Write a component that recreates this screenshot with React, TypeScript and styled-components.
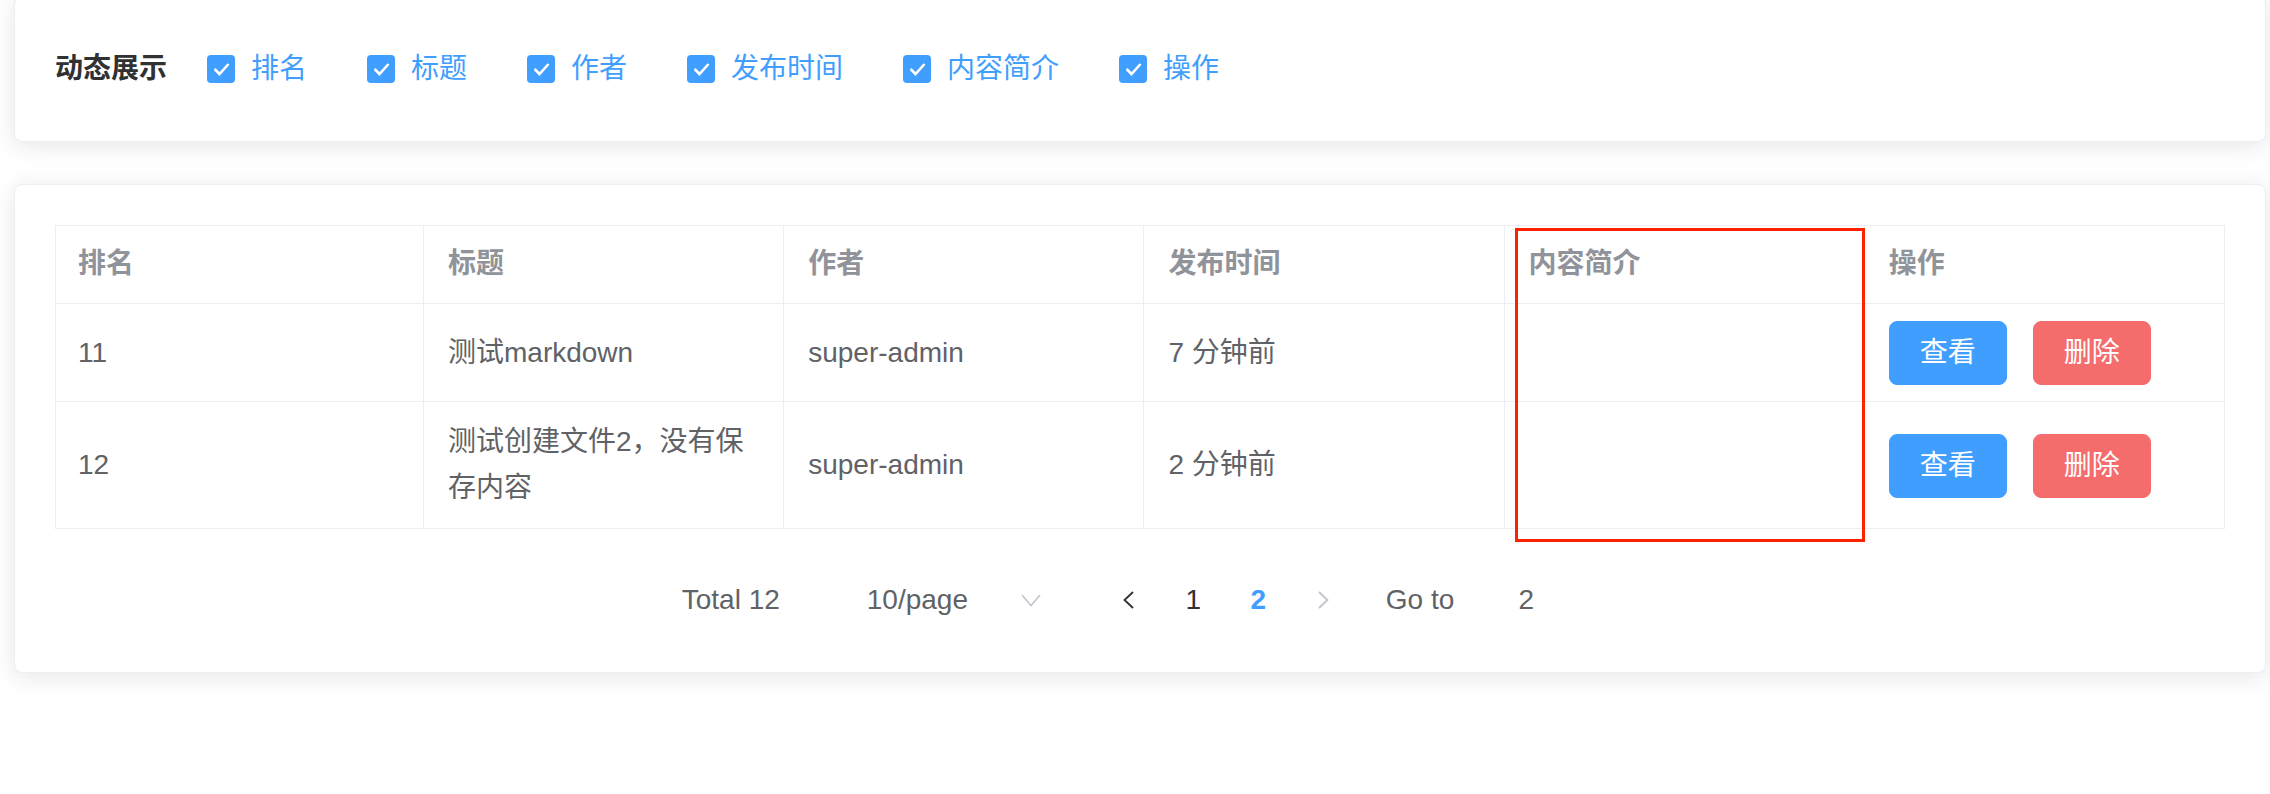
import React from 'react';
import styled, { createGlobalStyle } from 'styled-components';

const GlobalStyle = createGlobalStyle`
  html, body { margin: 0; padding: 0; background: #ffffff; }
  body { font-family: "Liberation Sans", "Noto Sans CJK SC", sans-serif; }
  *, *::before, *::after { box-sizing: border-box; }
`;

const Page = styled.div`
  display: flex;
  flex-direction: column;
  gap: 42px;
  margin-top: -4px;
  padding: 0 4px 40px 14px;
`;

const Card = styled.section`
  background: #ffffff;
  border: 1px solid #ebeef5;
  border-radius: 8px;
  box-shadow: 0 4px 24px 0 rgba(0, 0, 0, 0.1);
  padding: 40px;
`;

const FilterRow = styled.div`
  display: flex;
  align-items: center;
  height: 64px;
`;

const FilterLabel = styled.span`
  font-size: 28px;
  line-height: 28px;
  font-weight: 700;
  color: #303133;
  margin-right: 40px;
`;

const CheckItem = styled.label`
  display: inline-flex;
  align-items: center;
  gap: 16px;
  margin-right: 60px;
  cursor: pointer;
`;

const CheckBox = styled.span`
  display: flex;
  width: 28px;
  height: 28px;
  border-radius: 4px;
  background: #409eff;
`;

const CheckText = styled.span`
  font-size: 28px;
  line-height: 28px;
  color: #409eff;
`;

const Table = styled.div`
  position: relative;
  display: grid;
  grid-template-columns: 368px repeat(5, 1fr);
  border-left: 1px solid #ebeef5;
  border-top: 1px solid #ebeef5;
`;

type CellKind = 'head' | 'body' | 'ops';

const paddings: Record<CellKind, string> = {
  head: '15px 20px 16px',
  body: '17px 20px 17px',
  ops: '17px 20px 16px',
};

const Cell = styled.div<{ $kind: CellKind; $first?: boolean }>`
  display: flex;
  align-items: center;
  gap: 26px;
  min-width: 0;
  border-right: 1px solid #ebeef5;
  border-bottom: 1px solid #ebeef5;
  padding: ${(p) => paddings[p.$kind]};
  padding-left: ${(p) => (p.$first ? '22px' : '24px')};
  font-size: 28px;
  line-height: 46px;
  font-weight: ${(p) => (p.$kind === 'head' ? 700 : 400)};
  color: ${(p) => (p.$kind === 'head' ? '#909399' : '#606266')};
  word-break: break-all;
`;

const ActionButton = styled.button<{ $variant: 'primary' | 'danger' }>`
  height: 64px;
  padding: 0 30px;
  border-radius: 8px;
  border: 1px solid ${(p) => (p.$variant === 'primary' ? '#409eff' : '#f56c6c')};
  background: ${(p) => (p.$variant === 'primary' ? '#409eff' : '#f56c6c')};
  color: #ffffff;
  font-family: "Liberation Sans", "Noto Sans CJK SC", sans-serif;
  font-size: 28px;
  line-height: 28px;
  cursor: pointer;
  flex: none;
`;

const Highlight = styled.div`
  position: absolute;
  left: 1459px;
  top: 2px;
  width: 350px;
  height: 314px;
  border: 3px solid #ff2200;
  pointer-events: none;
`;

const Pager = styled.div`
  display: flex;
  align-items: center;
  justify-content: center;
  height: 64px;
  margin-top: 39px;
  padding-right: 22px;
  font-size: 28px;
  line-height: 28px;
  color: #606266;
`;

const Total = styled.span`
  margin-right: 57px;
`;

const SizeSelect = styled.div`
  display: flex;
  align-items: center;
  justify-content: space-between;
  width: 221px;
  height: 64px;
  padding: 0 17px 0 30px;
  margin-right: 38px;
`;

const PageItem = styled.span<{ $active?: boolean; $disabled?: boolean }>`
  display: flex;
  align-items: center;
  justify-content: center;
  width: 65px;
  height: 64px;
  color: ${(p) => (p.$active ? '#409eff' : p.$disabled ? '#c0c4cc' : '#303133')};
  font-weight: ${(p) => (p.$active ? 700 : 400)};
`;

const JumpLabel = styled.span`
  margin-left: 30px;
  margin-right: 22px;
`;

const JumpInput = styled.span`
  display: flex;
  align-items: center;
  justify-content: center;
  width: 100px;
  height: 64px;
`;

const columns = ['排名', '标题', '作者', '发布时间', '内容简介', '操作'];

const rows = [
  { rank: '11', title: '测试markdown', author: 'super-admin', time: '7 分钟前', intro: '' },
  { rank: '12', title: '测试创建文件2，没有保存内容', author: 'super-admin', time: '2 分钟前', intro: '' },
];

const Check = () => (
  <svg width="28" height="28" viewBox="0 0 28 28">
    <polyline points="7.5,14 12.5,19 21.5,9" fill="none" stroke="#ffffff" strokeWidth="2.6" />
  </svg>
);

const Chevron = ({ dir, color }: { dir: 'left' | 'right' | 'down'; color: string }) => {
  if (dir === 'down') {
    return (
      <svg width="20" height="13" viewBox="0 0 20 13">
        <polyline points="1,1 10,11.5 19,1" fill="none" stroke={color} strokeWidth="1.6" />
      </svg>
    );
  }
  return (
    <svg width="11" height="18" viewBox="0 0 11 18">
      <polyline
        points={dir === 'left' ? '10,1 1.5,9 10,17' : '1,1 9.5,9 1,17'}
        fill="none"
        stroke={color}
        strokeWidth="1.8"
      />
    </svg>
  );
};

export default function App() {
  return (
    <>
      <GlobalStyle />
      <Page>
        <Card>
          <FilterRow>
            <FilterLabel>动态展示</FilterLabel>
            {columns.map((c) => (
              <CheckItem key={c}>
                <CheckBox>
                  <Check />
                </CheckBox>
                <CheckText>{c}</CheckText>
              </CheckItem>
            ))}
          </FilterRow>
        </Card>
        <Card>
          <Table>
            {columns.map((c, i) => (
              <Cell key={c} $kind="head" $first={i === 0}>
                {c}
              </Cell>
            ))}
            {rows.map((r) => (
              <React.Fragment key={r.rank}>
                <Cell $kind="body" $first>
                  <span>{r.rank}</span>
                </Cell>
                <Cell $kind="body">
                  <span>{r.title}</span>
                </Cell>
                <Cell $kind="body">
                  <span>{r.author}</span>
                </Cell>
                <Cell $kind="body">
                  <span>{r.time}</span>
                </Cell>
                <Cell $kind="body">
                  <span>{r.intro}</span>
                </Cell>
                <Cell $kind="ops">
                  <ActionButton $variant="primary">查看</ActionButton>
                  <ActionButton $variant="danger">删除</ActionButton>
                </Cell>
              </React.Fragment>
            ))}
            <Highlight />
          </Table>
          <Pager>
            <Total>Total 12</Total>
            <SizeSelect>
              <span>10/page</span>
              <Chevron dir="down" color="#c0c4cc" />
            </SizeSelect>
            <PageItem>
              <Chevron dir="left" color="#303133" />
            </PageItem>
            <PageItem>1</PageItem>
            <PageItem $active>2</PageItem>
            <PageItem $disabled>
              <Chevron dir="right" color="#c0c4cc" />
            </PageItem>
            <JumpLabel>Go to</JumpLabel>
            <JumpInput>2</JumpInput>
          </Pager>
        </Card>
      </Page>
    </>
  );
}
